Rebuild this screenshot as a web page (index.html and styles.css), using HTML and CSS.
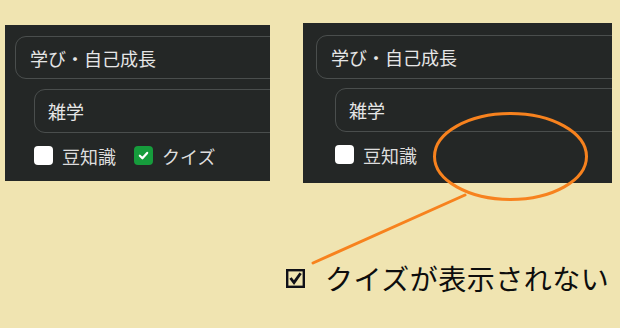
FILE: index.html
```html
<!DOCTYPE html>
<html lang="ja">
<head>
<meta charset="utf-8">
<link rel="stylesheet" href="styles.css">
</head>
<body>
<div class="stage">
  <div class="panels">
    <section class="panel panel-a">
      <div class="field field-top">学び・自己成長</div>
      <div class="field field-sub">雑学</div>
      <div class="checks">
        <label class="check"><span class="box"></span><span>豆知識</span></label>
        <label class="check"><span class="box box-on"><svg class="tick" viewBox="0 0 12 12" width="11" height="11"><path d="M2 6.3 L4.8 9 L10 3.2" fill="none" stroke="#fff" stroke-width="2.4" stroke-linecap="round" stroke-linejoin="round"/></svg></span><span>クイズ</span></label>
      </div>
    </section>
    <section class="panel panel-b">
      <div class="field field-top">学び・自己成長</div>
      <div class="field field-sub">雑学</div>
      <div class="checks">
        <label class="check"><span class="box"></span><span>豆知識</span></label>
      </div>
    </section>
  </div>
  <div class="note">
    <svg class="note-box" viewBox="0 0 19 19" width="19" height="19"><rect x="1.2" y="1.2" width="16.6" height="16.6" fill="none" stroke="#0f1018" stroke-width="2.4"/><path d="M4.5 9 L8 13.6 L14.6 4.2" fill="none" stroke="#0f1018" stroke-width="2.8" stroke-linejoin="miter"/></svg>
    <span class="note-text">クイズが表示されない</span>
  </div>
  <svg class="callout" viewBox="0 0 620 328" width="620" height="328">
    <ellipse cx="510.5" cy="156.5" rx="76" ry="43" fill="none" stroke="#f7821e" stroke-width="3"/>
    <line x1="465" y1="195" x2="313" y2="263" stroke="#f7821e" stroke-width="3" stroke-linecap="round"/>
  </svg>
</div>
</body>
</html>
```

FILE: styles.css
```css
html, body {
  margin: 0;
  padding: 0;
}
body {
  background: #f0e4b1;
  font-family: "Noto Sans CJK JP", "Noto Sans", sans-serif;
}
.stage {
  position: relative;
  width: 620px;
  height: 328px;
  overflow: hidden;
}
.panels {
  display: flex;
  align-items: flex-start;
  padding-top: 23px;
}
.panel {
  background: #242726;
  overflow: hidden;
  box-sizing: border-box;
}
.panel-a {
  margin-left: 5px;
  margin-top: 2px;
  width: 265px;
  height: 156px;
  padding: 11px 0 0 10px;
}
.panel-b {
  margin-left: 33px;
  width: 309px;
  height: 160px;
  padding: 12px 0 0 13px;
}
.field {
  width: 420px;
  box-sizing: border-box;
  border: 1px solid #4a4e4d;
  border-radius: 11px;
  display: flex;
  align-items: center;
  color: #e6e6e6;
  font-size: 18px;
  white-space: nowrap;
}
.field-top {
  height: 43px;
  padding-left: 14px;
}
.field-sub {
  height: 44px;
  margin-left: 19px;
  margin-top: 10px;
  padding-left: 13px;
}
.panel-b .field-top {
  height: 44px;
}
.panel-b .field-sub {
  margin-top: 9px;
}
.checks {
  display: flex;
  align-items: center;
  gap: 18px;
  margin-left: 19px;
  margin-top: 13px;
  height: 19px;
}
.check {
  display: flex;
  align-items: center;
  gap: 9px;
  color: #dedede;
  font-size: 18px;
  white-space: nowrap;
}
.box {
  width: 19px;
  height: 19px;
  border-radius: 4px;
  background: #ffffff;
  flex: none;
}
.box-on {
  background: #169c3c;
  display: flex;
  align-items: center;
  justify-content: center;
}
.note {
  display: flex;
  align-items: center;
  gap: 20px;
  margin-top: 80px;
  padding-left: 286px;
  height: 30px;
}
.note-box {
  flex: none;
}
.note-text {
  font-size: 28px;
  color: #0d0d0d;
  letter-spacing: 0.5px;
  white-space: nowrap;
}
.callout {
  position: absolute;
  left: 0;
  top: 0;
  pointer-events: none;
}
```
